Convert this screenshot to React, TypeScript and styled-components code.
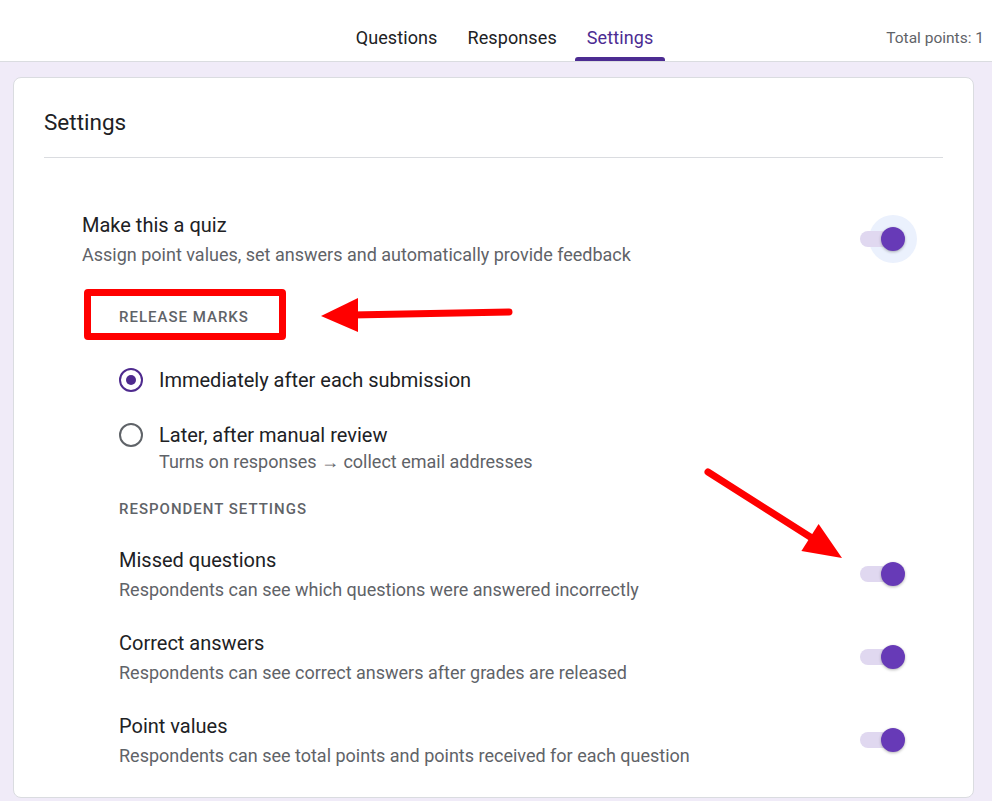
import React from "react";
import styled, { createGlobalStyle } from "styled-components";

const GlobalStyle = createGlobalStyle`
  html, body {
    margin: 0;
    padding: 0;
    background: #f0ebf8;
    font-family: Roboto, "Liberation Sans", Arial, sans-serif;
    color: #202124;
  }
  * { box-sizing: border-box; }
`;

const Page = styled.div`
  position: relative;
  min-height: 100vh;
`;

const Header = styled.header`
  height: 62px;
  background: #fff;
  border-bottom: 1px solid #dadce0;
  display: grid;
  grid-template-columns: 1fr auto 1fr;
`;

const Tabs = styled.nav`
  grid-column: 2;
  display: flex;
  gap: 6px;
  margin-left: 17px;
`;

const Tab = styled.div<{ $active?: boolean }>`
  position: relative;
  height: 61px;
  display: flex;
  align-items: center;
  padding: 13px 12px 0;
  font-size: 18px;
  font-weight: 400;
  letter-spacing: 0.1px;
  color: ${(p) => (p.$active ? "#4c2c92" : "#202124")};

  &::after {
    content: "";
    display: ${(p) => (p.$active ? "block" : "none")};
    position: absolute;
    left: 0;
    right: 0;
    bottom: 0;
    height: 4px;
    border-radius: 3px 3px 0 0;
    background: #4c2c92;
  }
`;

const TotalPoints = styled.div`
  grid-column: 3;
  justify-self: end;
  align-self: center;
  padding: 14px 8px 0 0;
  font-size: 15.5px;
  color: #5f6368;
`;

const Card = styled.section`
  margin: 15px 18px 0 13px;
  background: #fff;
  border: 1px solid #dadce0;
  border-radius: 8px;
  padding: 30px 30px 31px;
`;

const CardTitle = styled.h1`
  margin: 0;
  font-size: 22.5px;
  line-height: 28px;
  font-weight: 400;
  padding-bottom: 21px;
  border-bottom: 1px solid #dadce0;
`;

const Body = styled.div`
  padding: 55px 38px 0;
`;

const Row = styled.div<{ $gap?: number }>`
  display: flex;
  align-items: center;
  justify-content: space-between;
  margin-top: ${(p) => p.$gap ?? 0}px;
`;

const RowText = styled.div``;

const RowTitle = styled.div`
  font-size: 20px;
  line-height: 24px;
  color: #202124;
`;

const RowDesc = styled.div<{ $gap?: number }>`
  margin-top: ${(p) => p.$gap ?? 8}px;
  font-size: 18px;
  line-height: 20px;
  color: #5f6368;
`;

const Indented = styled.div`
  padding-left: 37px;
`;

const SectionLabel = styled.div<{ $gap: number; $marked?: boolean }>`
  position: relative;
  display: inline-block;
  margin-top: ${(p) => p.$gap}px;
  font-size: 15px;
  line-height: 20px;
  font-weight: 500;
  letter-spacing: 1px;
  text-transform: uppercase;
  color: #5f6368;

  &::after {
    content: "";
    display: ${(p) => (p.$marked ? "block" : "none")};
    position: absolute;
    left: -35px;
    right: -37px;
    top: -18px;
    bottom: -13px;
    border: 7px solid #ff0000;
    border-radius: 4px;
  }
`;

const Option = styled.div<{ $gap: number }>`
  display: grid;
  grid-template-columns: 24px auto;
  column-gap: 16px;
  align-items: center;
  margin-top: ${(p) => p.$gap}px;
`;

const Radio = styled.span<{ $checked?: boolean }>`
  width: 24px;
  height: 24px;
  border-radius: 50%;
  border: 2px solid ${(p) => (p.$checked ? "#4e2a8e" : "#5f6368")};
  display: flex;
  align-items: center;
  justify-content: center;

  &::before {
    content: "";
    display: ${(p) => (p.$checked ? "block" : "none")};
    width: 10px;
    height: 10px;
    border-radius: 50%;
    background: #4e2a8e;
  }
`;

const OptionSub = styled.div`
  grid-column: 2;
  margin-top: 5px;
  font-size: 18px;
  line-height: 20px;
  color: #5f6368;
`;

const ToggleWrap = styled.span<{ $halo?: boolean }>`
  position: relative;
  width: 45px;
  height: 24px;
  display: inline-flex;
  align-items: center;
  flex-shrink: 0;

  &::before {
    content: "";
    display: ${(p) => (p.$halo ? "block" : "none")};
    position: absolute;
    left: 9px;
    top: -12px;
    width: 48px;
    height: 48px;
    border-radius: 50%;
    background: #ebf1fd;
  }
`;

const Track = styled.span`
  position: relative;
  width: 38px;
  height: 16px;
  border-radius: 8px;
  background: #e0d8f0;
`;

const Thumb = styled.span`
  position: absolute;
  left: 21px;
  top: 0;
  width: 24px;
  height: 24px;
  border-radius: 50%;
  background: #673ab7;
  box-shadow: 0 1px 3px rgba(0, 0, 0, 0.3);
`;

const Annotations = styled.svg`
  position: absolute;
  left: 0;
  top: 0;
  pointer-events: none;
`;

const Toggle: React.FC<{ halo?: boolean }> = ({ halo }) => (
  <ToggleWrap $halo={halo}>
    <Track />
    <Thumb />
  </ToggleWrap>
);

const respondentSettings = [
  {
    title: "Missed questions",
    desc: "Respondents can see which questions were answered incorrectly",
  },
  {
    title: "Correct answers",
    desc: "Respondents can see correct answers after grades are released",
  },
  {
    title: "Point values",
    desc: "Respondents can see total points and points received for each question",
  },
];

const App: React.FC = () => {
  return (
    <Page>
      <GlobalStyle />
      <Header>
        <Tabs>
          <Tab>Questions</Tab>
          <Tab>Responses</Tab>
          <Tab $active>Settings</Tab>
        </Tabs>
        <TotalPoints>Total points: 1</TotalPoints>
      </Header>

      <Card>
        <CardTitle>Settings</CardTitle>
        <Body>
          <Row>
            <RowText>
              <RowTitle>Make this a quiz</RowTitle>
              <RowDesc>Assign point values, set answers and automatically provide feedback</RowDesc>
            </RowText>
            <Toggle halo />
          </Row>

          <Indented>
            <SectionLabel $gap={42} $marked>Release marks</SectionLabel>

            <Option $gap={41}>
              <Radio $checked />
              <RowTitle>Immediately after each submission</RowTitle>
            </Option>
            <Option $gap={31}>
              <Radio />
              <RowTitle>Later, after manual review</RowTitle>
              <OptionSub>Turns on responses → collect email addresses</OptionSub>
            </Option>

            <SectionLabel $gap={27}>Respondent settings</SectionLabel>

            {respondentSettings.map((s, i) => (
              <Row key={s.title} $gap={i === 0 ? 29 : 31}>
                <RowText>
                  <RowTitle>{s.title}</RowTitle>
                  <RowDesc>{s.desc}</RowDesc>
                </RowText>
                <Toggle />
              </Row>
            ))}
          </Indented>
        </Body>
      </Card>

      <Annotations width="992" height="801" viewBox="0 0 992 801">
        <line x1="509" y1="312" x2="352" y2="315" stroke="#ff0000" strokeWidth="7" strokeLinecap="round" />
        <polygon points="321,316 358,298 358,332" fill="#ff0000" />
        <line x1="708" y1="472" x2="815" y2="540" stroke="#ff0000" strokeWidth="7" strokeLinecap="round" />
        <polygon points="842,558 818.6,524 801.4,551" fill="#ff0000" />
      </Annotations>
    </Page>
  );
};

export default App;
